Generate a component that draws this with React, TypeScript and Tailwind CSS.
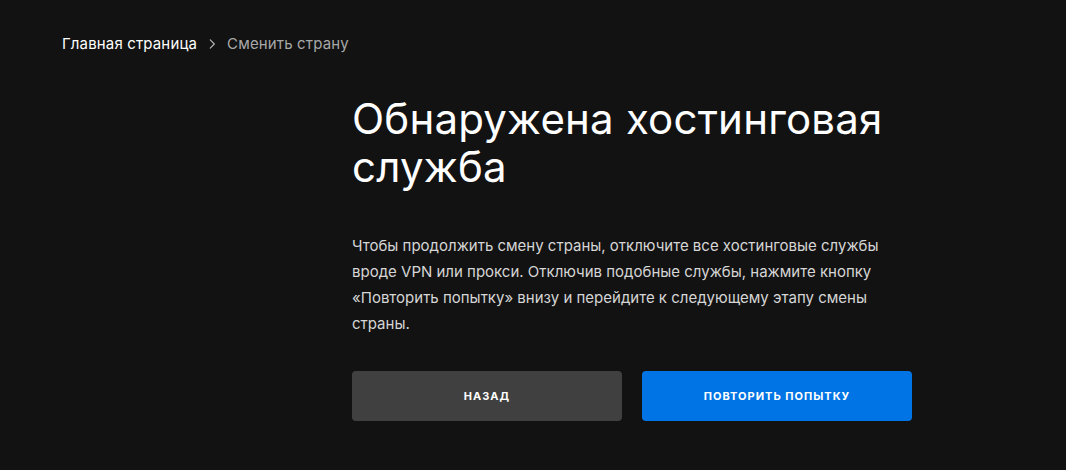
export default function App() {
  return (
    <div
      className="min-h-screen w-full bg-[#121212] text-white"
      style={{ fontFamily: 'Inter, "Noto Sans", sans-serif' }}
    >
      {/* Breadcrumb */}
      <nav className="flex items-center gap-[8px] px-[62px] pt-[33px] text-[15px] leading-[22px] tracking-[0.15px]">
        <span className="text-white">Главная страница</span>
        <svg
          viewBox="0 0 24 24"
          fill="none"
          stroke="currentColor"
          strokeWidth={2}
          className="h-[14px] w-[14px] text-[#b5b5b5]"
        >
          <path strokeLinecap="round" strokeLinejoin="round" d="m9 5 7 7-7 7" />
        </svg>
        <span className="text-[#a8a8a8]">Сменить страну</span>
      </nav>

      {/* Content */}
      <div className="ml-[352px] w-[560px] pt-[40px]">
        <h1 className="text-[42px] font-normal leading-[48px] tracking-[0.2px]">
          Обнаружена хостинговая служба
        </h1>
        <p className="mt-[42px] text-[15px] leading-[26px] text-[#d6d6d6]">
          Чтобы продолжить смену страны, отключите все хостинговые службы вроде VPN или
          прокси. Отключив подобные службы, нажмите кнопку «Повторить попытку» внизу и
          перейдите к следующему этапу смены страны.
        </p>
        <div className="mt-[34px] flex gap-5">
          <button className="h-[50px] w-[270px] rounded-[4px] bg-[#404040] text-[11px] font-bold tracking-[1px] text-white">
            НАЗАД
          </button>
          <button className="h-[50px] w-[270px] rounded-[4px] bg-[#0074e4] text-[11px] font-bold tracking-[1px] text-white">
            ПОВТОРИТЬ ПОПЫТКУ
          </button>
        </div>
      </div>
    </div>
  );
}
